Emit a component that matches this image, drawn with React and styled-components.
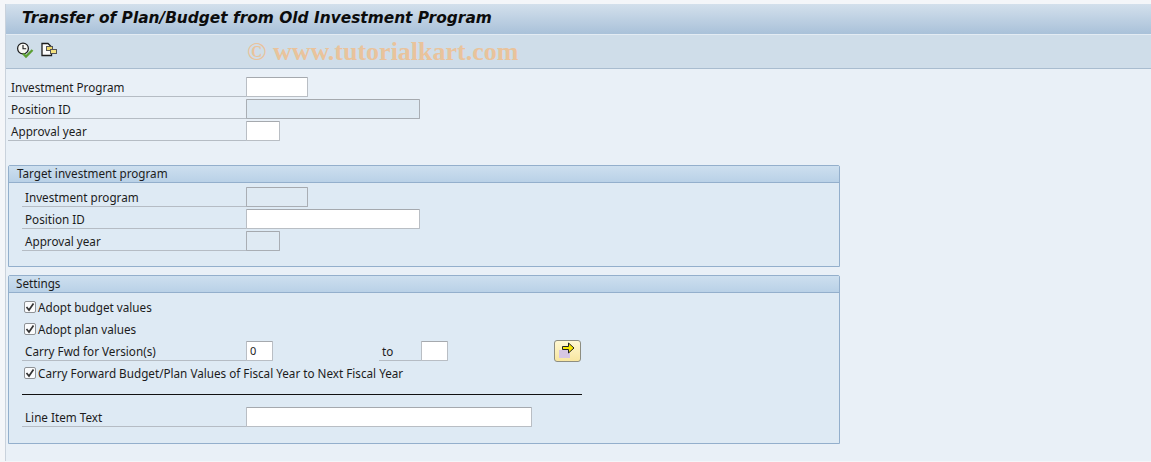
import React from "react";
import styled, { createGlobalStyle } from "styled-components";

const GlobalStyle = createGlobalStyle`
  html, body {
    margin: 0;
    padding: 0;
    background: #f4f6f9;
  }
  #root {
    width: 1151px;
    height: 462px;
    overflow: hidden;
  }
`;

const Screen = styled.div`
  box-sizing: border-box;
  width: 1151px;
  height: 462px;
  padding: 4px 0 1px 5px;
  font-family: "Noto Sans", "DejaVu Sans", sans-serif;
  font-size: 11.7px;
  color: #1c1c1c;
`;

const Window = styled.div`
  height: 100%;
  display: flex;
  flex-direction: column;
  background: #e9f0f7;
  border-left: 1px solid #c9d2dc;
`;

const TitleBar = styled.div`
  box-sizing: border-box;
  height: 31px;
  padding: 0 0 3px 16px;
  display: flex;
  align-items: center;
  background: linear-gradient(#d3e0ec, #a9c1d9);
  border-bottom: 1px solid #e3ebf3;
`;

const Title = styled.h1`
  margin: 0;
  font-family: "DejaVu Sans", sans-serif;
  font-size: 15.4px;
  font-weight: 700;
  font-style: italic;
  color: #0c0c0c;
  white-space: nowrap;
`;

const Toolbar = styled.div`
  box-sizing: border-box;
  height: 34px;
  padding-left: 11px;
  display: flex;
  align-items: center;
  gap: 7px;
  background: #cfdde9;
  border-bottom: 1px solid #a9bccf;
`;

const ToolIcon = styled.svg`
  width: 17px;
  height: 17px;
  flex: none;
  margin-top: -2px;
`;

const Watermark = styled.span`
  margin-left: 182px;
  font-family: "Liberation Serif", serif;
  font-size: 26px;
  font-weight: 700;
  color: #e9c39c;
  white-space: nowrap;
`;

const Body = styled.div`
  flex: 1;
  padding: 6px 0 0 2px;
`;

const Rows = styled.div`
  display: flex;
  flex-direction: column;
`;

const Row = styled.div`
  height: 22px;
  display: flex;
  align-items: flex-end;
`;

const Label = styled.label`
  box-sizing: border-box;
  width: ${(p) => p.$width}px;
  height: 20px;
  flex: none;
  padding-left: 3px;
  padding-top: 1px;
  line-height: 18px;
  border-bottom: 1px solid #b5bcc4;
  white-space: nowrap;
`;

const Field = styled.div`
  box-sizing: border-box;
  width: ${(p) => p.$width}px;
  height: 20px;
  flex: none;
  padding-left: 3px;
  line-height: 18px;
  font-size: 11px;
  background: ${(p) => (p.$disabled ? "#dfeaf3" : "#ffffff")};
  border: 1px solid ${(p) => (p.$disabled ? "#a9aeb4" : "#b9bec4")};
  border-top-color: #a5a9ae;
  border-radius: 1px;
`;

const Group = styled.section`
  box-sizing: border-box;
  width: 832px;
  height: ${(p) => p.$height}px;
  margin-top: ${(p) => p.$top}px;
  background: #deeaf4;
  border: 1px solid #93afcc;
  border-radius: 2px 2px 0 0;
`;

const GroupHead = styled.div`
  box-sizing: border-box;
  height: 17px;
  padding-left: ${(p) => p.$indent}px;
  line-height: 15px;
  background: linear-gradient(#cddfef, #b9d1e7);
  border-bottom: 1px solid #93afcc;
`;

const GroupBody = styled.div`
  padding: 2px 0 0 13px;
`;

const CheckRow = styled.div`
  box-sizing: border-box;
  height: 22px;
  display: flex;
  align-items: center;
  gap: 2px;
  padding: 2px 0 0 2px;
`;

const Box = styled.span`
  box-sizing: border-box;
  width: 12px;
  height: 12px;
  flex: none;
  display: flex;
  align-items: center;
  justify-content: center;
  background: #fbfcfd;
  border: 1px solid #8e9296;
  border-radius: 2px;
`;

const Gap = styled.div`
  width: ${(p) => p.$width}px;
  flex: none;
`;

const GoButton = styled.button`
  box-sizing: border-box;
  width: 27px;
  height: 22px;
  flex: none;
  margin: 0 0 -1px 0;
  padding: 0;
  display: flex;
  align-items: center;
  justify-content: center;
  background: linear-gradient(#fff8d2, #f8e6a0);
  border: 1px solid #8d8d80;
  border-radius: 3px;
`;

const Divider = styled.div`
  width: 560px;
  height: 1px;
  margin: 11px 0 10px 0;
  background: #111111;
`;

const Check = () => (
  <svg width="10" height="10" viewBox="0 0 10 10">
    <path d="M1.5 5 L4 8 L8.5 1.5" fill="none" stroke="#333" strokeWidth="1.7" />
  </svg>
);

const Checkbox = ({ children }) => (
  <CheckRow>
    <Box>
      <Check />
    </Box>
    <span>{children}</span>
  </CheckRow>
);

const ClockCheck = () => (
  <ToolIcon viewBox="0 0 17 17">
    <circle cx="6" cy="6.5" r="5.4" fill="#f8f8f4" stroke="#1c1c1c" strokeWidth="1.2" />
    <path d="M6 3 V6.8 H9.2" fill="none" stroke="#1c1c1c" strokeWidth="1.1" />
    <path d="M6 11.5 L9 14.5 L15.5 8" fill="none" stroke="#5c9f33" strokeWidth="2.4" />
  </ToolIcon>
);

const CopyDocs = () => (
  <ToolIcon viewBox="0 0 17 17">
    <path d="M1 1.5 H7 L10.5 5 V13.5 H1 Z" fill="#fbfbfb" stroke="#1c1c1c" strokeWidth="1.3" />
    <rect x="5.5" y="4.5" width="6" height="4" fill="#ecd66a" stroke="#555" />
    <rect x="9.5" y="7.5" width="6" height="4" fill="#f3e07e" stroke="#555" />
  </ToolIcon>
);

const ArrowIcon = () => (
  <svg width="17" height="18" viewBox="0 0 17 18">
    <rect x="0" y="8" width="11" height="8" fill="#d6c6e4" />
    <path d="M3.5 4.5 H9.5 V1 L15 6 L9.5 11 V7.5 H3.5 Z" fill="#f7e600" stroke="#222" />
  </svg>
);

const App = () => {
  return (
    <Screen>
      <GlobalStyle />
      <Window>
        <TitleBar>
          <Title>Transfer of Plan/Budget from Old Investment Program</Title>
        </TitleBar>
        <Toolbar>
          <ClockCheck />
          <CopyDocs />
          <Watermark>© www.tutorialkart.com</Watermark>
        </Toolbar>
        <Body>
          <Rows>
            <Row>
              <Label $width={238}>Investment Program</Label>
              <Field $width={62} />
            </Row>
            <Row>
              <Label $width={238}>Position ID</Label>
              <Field $width={174} $disabled />
            </Row>
            <Row>
              <Label $width={238}>Approval year</Label>
              <Field $width={34} />
            </Row>
          </Rows>

          <Group $height={102} $top={24}>
            <GroupHead $indent={8}>Target investment program</GroupHead>
            <GroupBody>
              <Row>
                <Label $width={224}>Investment program</Label>
                <Field $width={62} $disabled />
              </Row>
              <Row>
                <Label $width={224}>Position ID</Label>
                <Field $width={174} />
              </Row>
              <Row>
                <Label $width={224}>Approval year</Label>
                <Field $width={34} $disabled />
              </Row>
            </GroupBody>
          </Group>

          <Group $height={169} $top={8}>
            <GroupHead $indent={7}>Settings</GroupHead>
            <GroupBody>
              <Checkbox>Adopt budget values</Checkbox>
              <Checkbox>Adopt plan values</Checkbox>
              <Row>
                <Label $width={224}>Carry Fwd for Version(s)</Label>
                <Field $width={27}>0</Field>
                <Gap $width={106} />
                <Label $width={42}>to</Label>
                <Field $width={27} />
                <Gap $width={106} />
                <GoButton aria-label="Next">
                  <ArrowIcon />
                </GoButton>
              </Row>
              <Checkbox>Carry Forward Budget/Plan Values of Fiscal Year to Next Fiscal Year</Checkbox>
              <Divider />
              <Row>
                <Label $width={224}>Line Item Text</Label>
                <Field $width={286} />
              </Row>
            </GroupBody>
          </Group>
        </Body>
      </Window>
    </Screen>
  );
};

export default App;
